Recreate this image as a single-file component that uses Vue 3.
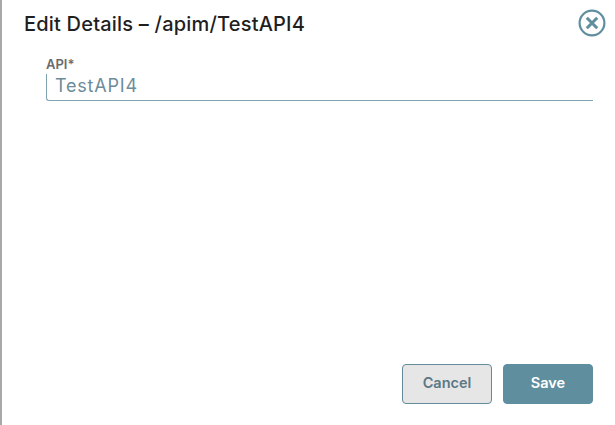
<script setup>
const title = 'Edit Details – /apim/TestAPI4'
</script>

<template>
  <div class="dialog">
    <header class="head">
      <h1 class="title">{{ title }}</h1>
      <button class="close" aria-label="Close">
        <svg width="28" height="28" viewBox="0 0 28 28" fill="none" stroke="#5f8f9f">
          <circle cx="14" cy="14" r="12.4" stroke-width="2.2" />
          <path d="M8.8 8.8 19.2 19.2M19.2 8.8 8.8 19.2" stroke-width="3" />
        </svg>
      </button>
    </header>
    <section class="field">
      <label class="label">API*</label>
      <div class="input">TestAPI4</div>
    </section>
    <footer class="foot">
      <button class="btn cancel"><span>Cancel</span></button>
      <button class="btn save"><span>Save</span></button>
    </footer>
  </div>
</template>

<style scoped>
.dialog {
  box-sizing: border-box;
  width: 615px;
  height: 425px;
  background: #fff;
  border-left: 2px solid #a8a8a8;
  display: flex;
  flex-direction: column;
  font-family: Inter, "Liberation Sans", sans-serif;
}
.head {
  display: flex;
  align-items: flex-start;
  justify-content: space-between;
  padding: 9px 9px 0 22px;
}
.title {
  margin: 1px 0 0;
  font-size: 20px;
  font-weight: 500;
  letter-spacing: 0.2px;
  color: #1f1f1f;
  line-height: 28px;
}
.close {
  padding: 0;
  border: 0;
  background: none;
  display: flex;
}
.field {
  margin: 19px 22px 0 44px;
}
.label {
  display: block;
  font-size: 13px;
  font-weight: 600;
  line-height: 15px;
  color: #6b6b6b;
}
.input {
  box-sizing: border-box;
  height: 27px;
  margin-top: 2px;
  padding-left: 8px;
  border-left: 1px solid #7fa3b0;
  border-bottom: 1px solid #7fa3b0;
  border-bottom-left-radius: 3px;
  font-size: 18px;
  letter-spacing: 0.8px;
  line-height: 24px;
  color: #6c8c99;
}
.foot {
  margin-top: auto;
  display: flex;
  justify-content: flex-end;
  gap: 11px;
  padding: 0 22px 21px 0;
}
.btn {
  box-sizing: border-box;
  width: 90px;
  height: 40px;
  padding: 0 0 3px;
  border-radius: 4px;
  font-family: inherit;
  font-size: 14.5px;
  font-weight: 600;
}
.cancel {
  background: #e6e6e6;
  border: 1px solid #648b99;
  color: #5c7885;
}
.save {
  background: #5f8f9f;
  border: 1px solid #5f8f9f;
  color: #fff;
}
</style>
